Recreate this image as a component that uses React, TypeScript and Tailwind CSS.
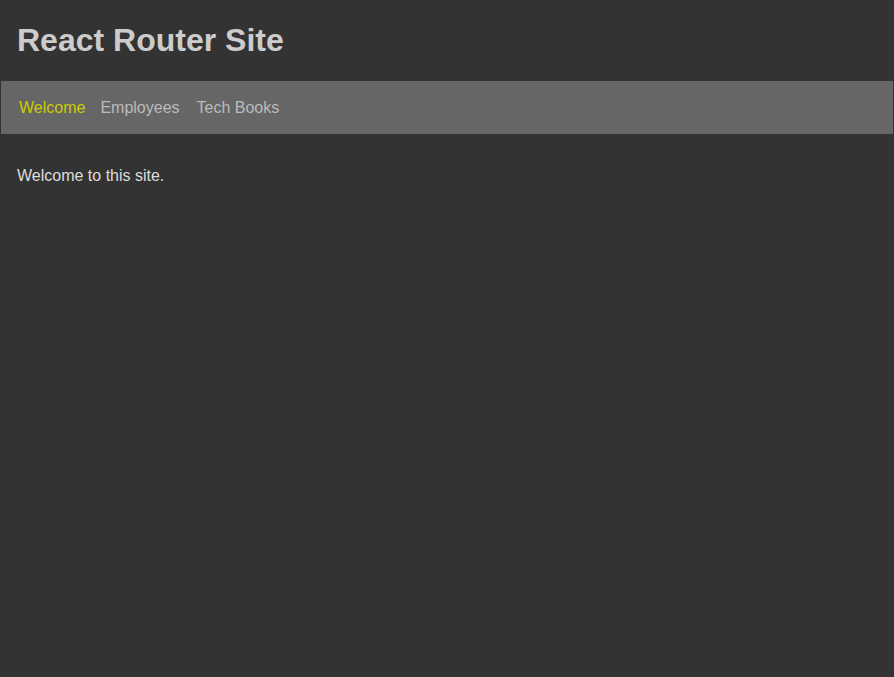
export default function App() {
  return (
    <div className="min-h-[677px] bg-[#333333] text-[#cccccc]" style={{ fontFamily: '"Liberation Sans", Arial, sans-serif' }}>
      <h1 className="m-0 pl-[17px] pr-4 pt-[22px] pb-[22px] text-[32px] font-bold leading-[37px] text-[#cccccc]">React Router Site</h1>
      <nav className="mx-px flex h-[53px] items-center bg-[#666666] pl-[18px] text-[16px]">
        <a className="mr-[15px] text-[#cccc00]">Welcome</a>
        <a className="mr-[17px] text-[#bbbbbb]">Employees</a>
        <a className="text-[#bbbbbb]">Tech Books</a>
      </nav>
      <div className="pl-[17px] pr-4 pt-[33px]">
        <p className="m-0 text-[16px] leading-[18px] text-[#dddddd]">Welcome to this site.</p>
      </div>
    </div>
  );
}
